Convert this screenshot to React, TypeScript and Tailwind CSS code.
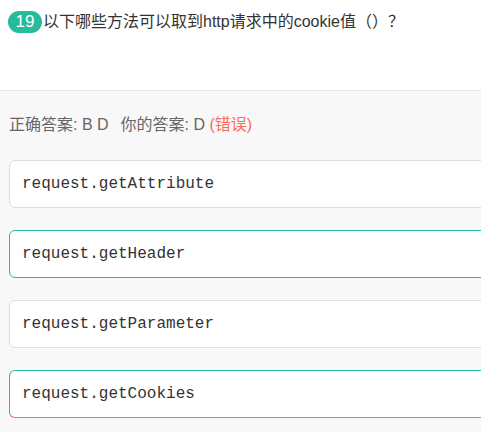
import React from "react";

const opts = [
  { text: "request.getAttribute", cls: "border-[#dddddd]" },
  { text: "request.getHeader", cls: "border-[#25bb9b]" },
  { text: "request.getParameter", cls: "border-[#dddddd]" },
  { text: "request.getCookies", cls: "border-[#25bb9b] border-b-[#fa6b5a]" },
];

export default function App() {
  return (
    <div className="w-[481px] h-[432px] overflow-hidden bg-[#f8f8f8] font-['Liberation_Sans','Noto_Sans_CJK_SC',sans-serif]">
      <div className="h-[91px] bg-white border-b border-[#e8e8e8] pt-[11px] pl-[8px] flex items-start">
        <span className="h-[22px] w-[34px] rounded-full bg-[#25bb9b] text-white text-[17px] leading-[22px] flex items-center justify-center">
          19
        </span>
        <span className="ml-[1px] text-[16px] leading-[22px] text-[#333]">
          以下哪些方法可以取到http请求中的cookie值（）？
        </span>
      </div>
      <div className="pt-[24px] pl-[9px]">
        <div className="text-[16px] leading-[20px] text-[#666] h-[20px] flex whitespace-pre">
          <span>正确答案: B D</span>
          <span className="ml-[12px]">
            你的答案: D <span className="text-[#fa6b5a]">(错误)</span>
          </span>
        </div>
        <div className="mt-[25px] flex flex-col gap-[22px] mr-[-40px]">
          {opts.map((o) => (
            <div
              key={o.text}
              className={`h-[48px] rounded-[6px] border bg-white flex items-center pl-[12px] text-[16px] text-[#333] font-['Liberation_Mono','Courier_New',monospace] ${o.cls}`}
            >
              {o.text}
            </div>
          ))}
        </div>
      </div>
    </div>
  );
}
